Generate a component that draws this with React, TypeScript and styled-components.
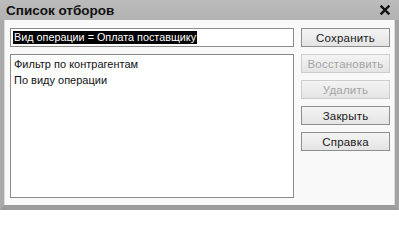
import styled, { createGlobalStyle } from "styled-components";

const GlobalStyle = createGlobalStyle`
  html, body {
    margin: 0;
    padding: 0;
    background: #ffffff;
  }
  body {
    font-family: "Liberation Sans", Arial, sans-serif;
  }
`;

const Window = styled.div`
  width: 399px;
  height: 210px;
  display: flex;
  flex-direction: column;
  box-sizing: border-box;
  background: #a8a8a8;
`;

const TitleBar = styled.div`
  height: 20px;
  flex: none;
  display: flex;
  align-items: center;
  justify-content: space-between;
  padding: 0 9px 0 6px;
  background: linear-gradient(#bcbcbc, #b2b2b2);
`;

const Title = styled.div`
  font-size: 13.5px;
  font-weight: bold;
  color: #111;
  padding-top: 1px;
`;

const CloseButton = styled.div`
  width: 10px;
  height: 10px;
  display: flex;
  cursor: pointer;
`;

const Frame = styled.div`
  flex: 1;
  display: flex;
  border-left: 4px solid #a9a9a9;
  border-right: 6px solid #a3a3a3;
  border-bottom: 5px solid #9c9c9c;
`;

const Body = styled.div`
  flex: 1;
  display: flex;
  gap: 7px;
  padding: 8px 4px 7px 5px;
  background: #f9f9f9;
  border-left: 1px solid #dadada;
  border-right: 1px solid #dadada;
`;

const LeftColumn = styled.div`
  width: 284px;
  display: flex;
  flex-direction: column;
  gap: 7px;
`;

const Field = styled.div`
  height: 19px;
  box-sizing: border-box;
  border: 1px solid #8c8c8c;
  background: #fff;
  display: flex;
  align-items: center;
  padding-left: 2px;
`;

const Selected = styled.span`
  background: #000;
  color: #fff;
  font-size: 10.8px;
  line-height: 13px;
  padding: 0 1px;
  white-space: nowrap;
`;

const List = styled.div`
  flex: 1;
  box-sizing: border-box;
  border: 1px solid #8a8a8a;
  background: #fff;
  padding: 1px 3px;
`;

const ListItem = styled.div`
  font-size: 11px;
  line-height: 16px;
  color: #111;
`;

const ButtonColumn = styled.div`
  width: 89px;
  display: flex;
  flex-direction: column;
  gap: 7px;
`;

const Button = styled.div<{ $disabled?: boolean }>`
  height: 19px;
  box-sizing: border-box;
  display: flex;
  align-items: center;
  justify-content: center;
  font-size: 11.5px;
  letter-spacing: 0.2px;
  color: ${(p) => (p.$disabled ? "#a4a4a4" : "#1a1a1a")};
  border: 1px solid ${(p) => (p.$disabled ? "#cdcdcd" : "#8e8e8e")};
  background: linear-gradient(#f4f4f4, #e4e4e4);
`;

const App = () => {
  return (
    <>
      <GlobalStyle />
      <Window>
        <TitleBar>
          <Title>Список отборов</Title>
          <CloseButton>
            <svg width="10" height="10" viewBox="0 0 10 10">
              <path d="M1.5 1.5 L8.5 8.5 M8.5 1.5 L1.5 8.5" stroke="#111" strokeWidth="2.4" strokeLinecap="square" />
            </svg>
          </CloseButton>
        </TitleBar>
        <Frame>
          <Body>
            <LeftColumn>
              <Field>
                <Selected>Вид операции = Оплата поставщику</Selected>
              </Field>
              <List>
                <ListItem>Фильтр по контрагентам</ListItem>
                <ListItem>По виду операции</ListItem>
              </List>
            </LeftColumn>
            <ButtonColumn>
              <Button>Сохранить</Button>
              <Button $disabled>Восстановить</Button>
              <Button $disabled>Удалить</Button>
              <Button>Закрыть</Button>
              <Button>Справка</Button>
            </ButtonColumn>
          </Body>
        </Frame>
      </Window>
    </>
  );
};

export default App;
